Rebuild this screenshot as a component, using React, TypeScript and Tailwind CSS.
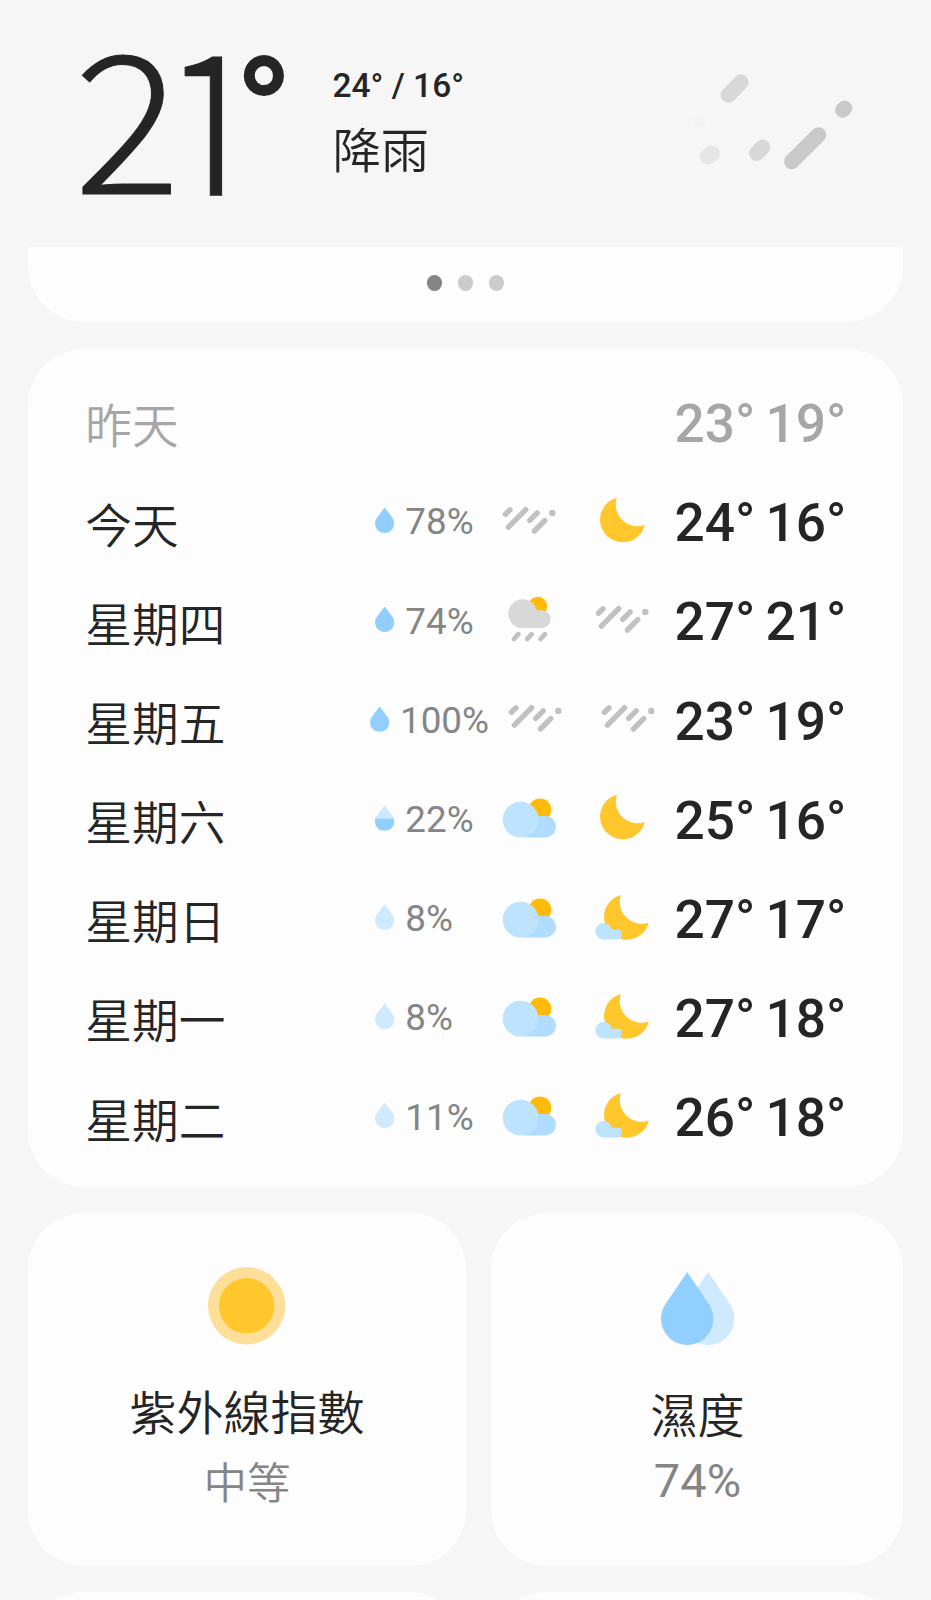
import React from "react";

type Sky = "rain" | "moon" | "sunRain" | "partlyCloudy" | "cloudyNight";

interface Day {
  name: string;
  chance?: number;
  day?: Sky;
  night?: Sky;
  high: number;
  low: number;
}

const days: Day[] = [
  { name: "昨天", high: 23, low: 19 },
  { name: "今天", chance: 78, day: "rain", night: "moon", high: 24, low: 16 },
  { name: "星期四", chance: 74, day: "sunRain", night: "rain", high: 27, low: 21 },
  { name: "星期五", chance: 100, day: "rain", night: "rain", high: 23, low: 19 },
  { name: "星期六", chance: 22, day: "partlyCloudy", night: "moon", high: 25, low: 16 },
  { name: "星期日", chance: 8, day: "partlyCloudy", night: "cloudyNight", high: 27, low: 17 },
  { name: "星期一", chance: 8, day: "partlyCloudy", night: "cloudyNight", high: 27, low: 18 },
  { name: "星期二", chance: 11, day: "partlyCloudy", night: "cloudyNight", high: 26, low: 18 },
];

const moonPath = "M24.2 5.9 A22.7 22.7 0 1 0 52.2 33.2 A21.8 21.8 0 0 1 24.2 5.9 Z";

function SkyIcon({ kind }: { kind: Sky }) {
  return (
    <svg viewBox="0 0 60 60" className="size-[60px] shrink-0">
      {kind === "rain" && (
        <g stroke="#c1c1c1" strokeWidth="5.4" strokeLinecap="round">
          <path d="M6.4 22.2 L11 17.8" />
          <path d="M9.4 35.2 L26.7 17.7" />
          <path d="M30.7 28.4 L38.2 20.9" />
          <path d="M35.4 39 L45.7 28.6" />
          <circle cx="53.3" cy="20.9" r="3.2" fill="#c1c1c1" stroke="none" />
        </g>
      )}
      {kind === "moon" && <path d={moonPath} fill="#ffc72c" transform="translate(.6 -.2)" />}
      {kind === "sunRain" && (
        <g>
          <circle cx="38.7" cy="15.2" r="9.4" fill="#ffba0c" />
          <circle cx="23.7" cy="22.7" r="14.4" fill="#d8d8d8" />
          <rect x="23" y="19.2" width="28.5" height="17.9" rx="8.9" fill="#d8d8d8" />
          <g stroke="#c1c1c1" strokeWidth="4.8" strokeLinecap="round">
            <path d="M15 48 L19.4 43.2" />
            <path d="M28.3 48 L32.7 43.2" />
            <path d="M41.6 48 L46 43.2" />
          </g>
        </g>
      )}
      {kind === "partlyCloudy" && (
        <g transform="translate(0 -.4)">
          <circle cx="41" cy="21.1" r="11.3" fill="#ffba0c" />
          <rect x="16" y="27.4" width="41" height="21.5" rx="10.7" fill="#b0dcff" />
          <circle cx="21.6" cy="31" r="17.9" fill="#bde3fe" />
        </g>
      )}
      {kind === "cloudyNight" && (
        <g transform="translate(0 -.4)">
          <path d={moonPath} fill="#ffc72c" transform="translate(4.6 .6)" />
          <circle cx="11.6" cy="42.6" r="8.2" fill="#bde3fe" />
          <path
            d="M11.6 36 L17 37 Q19 41.2 22 41.2 H26.2 Q29.8 41.4 29.8 45 Q29.8 50.8 26 50.8 H11.6 Z"
            fill="#bde3fe"
          />
        </g>
      )}
    </svg>
  );
}

function Drop({ chance }: { chance: number }) {
  const shape = "M9.65 0 L17.3 10 A9.65 9.65 0 1 1 2 10 Z";
  return (
    <svg viewBox="0 0 19.3 25.5" className="h-[25.5px] w-[19.3px] shrink-0 -translate-y-[1.5px]">
      <path d={shape} fill={chance >= 50 ? "#91cfff" : "#cfe9ff"} />
      {chance >= 20 && chance < 50 && (
        <path d="M0.2 13 H19.1 Q19.3 14 19.3 15.85 A9.65 9.65 0 0 1 0 15.85 Q0 14 .2 13 Z" fill="#91cfff" />
      )}
    </svg>
  );
}

function Row({ item }: { item: Day }) {
  const past = item.chance === undefined;
  const wide = item.chance === 100;
  return (
    <li className={`flex h-[99.2px] items-center ${past ? "text-[#a6a6a6]" : "text-[#252525]"}`}>
      <span className="-ml-[0.7px] w-[289.7px] translate-y-[0.6px] font-['Noto_Sans_CJK_TC'] text-[46.7px] leading-none font-[350]">
        {item.name}
      </span>
      {item.chance !== undefined && item.day && item.night ? (
        <div className={`flex items-center ${wide ? "-ml-[5.3px] w-[304.8px]" : "w-[299.5px]"}`}>
          <Drop chance={item.chance} />
          <span
            className={`ml-[11px] shrink-0 translate-y-[1.2px] text-[36.8px] leading-none text-[#858585] ${wide ? "w-[104.5px]" : "w-[93.7px]"}`}
          >
            {item.chance}%
          </span>
          <SkyIcon kind={item.day} />
          <div className="w-[33.5px] shrink-0" />
          <SkyIcon kind={item.night} />
        </div>
      ) : (
        <div className="w-[299.5px]" />
      )}
      <div className="flex translate-y-[1.7px] text-[53.2px] leading-none font-medium">
        <span className="w-[91px]">{item.high}°</span>
        <span>{item.low}°</span>
      </div>
    </li>
  );
}

export default function App() {
  return (
    <div className="flex h-[1600px] w-[931px] flex-col overflow-hidden bg-[#f6f6f6] font-['Roboto','Noto_Sans_CJK_TC',sans-serif] text-[#252525]">
      <header className="flex h-[247px] shrink-0">
        <div className="flex h-[209px] pt-[9px] pl-[73.5px] font-['Noto_Sans_CJK_TC'] text-[195px] leading-[200px] font-light [-webkit-text-stroke:1px_#252525]">
          <span className="w-[86.5px] origin-[0_186px] scale-x-[1.02] scale-y-[0.99]">2</span>
          <span className="w-[74.5px] origin-[0_48px] translate-y-[1px] scale-y-[1.11] [clip-path:inset(0_0_28px_0)]">1</span>
        </div>
        <span className="mt-[37.5px] w-[57px] text-[150px] leading-[150px] font-extrabold">°</span>
        <div className="ml-[41px] w-[200px] pt-[66px]">
          <p className="text-[33.5px] leading-10 font-medium">24° / 16°</p>
          <p className="mt-[13.5px] font-['Noto_Sans_CJK_TC'] text-[48.3px] leading-[54px] font-[350]">降雨</p>
        </div>
        <svg viewBox="0 0 170 110" className="mt-[65px] ml-[157.5px] h-[110px] w-[170px]">
          <g strokeWidth="15.3" strokeLinecap="round">
            <path d="M38.3 30 L51 17.2" stroke="#d8d8d8" />
            <circle cx="9.3" cy="56" r="6.5" fill="#f3f3f3" />
            <path d="M17.9 91.3 L21.9 88.7" stroke="#e6e6e6" strokeWidth="16.5" />
            <path d="M66.7 88.3 L72.7 82.2" stroke="#d8d8d8" />
            <path d="M101.7 96.5 L128.6 69.8" stroke="#c9c9c9" />
            <path d="M152.7 45 L154.6 43.2" stroke="#c9c9c9" />
          </g>
        </svg>
      </header>

      <main className="flex flex-col px-[28px]">
        <section className="flex h-[75px] items-center justify-center gap-[15.4px] rounded-b-[56px] bg-[#fdfdfd] pb-[3px]">
          <i className="size-[15.6px] rounded-full bg-[#858585]" />
          <i className="size-[15.6px] rounded-full bg-[#cbcbcb]" />
          <i className="size-[15.6px] rounded-full bg-[#cbcbcb]" />
        </section>

        <section className="mt-[27px] h-[838px] rounded-[56px] bg-[#fdfdfd] pt-[24.1px] pl-[58px]">
          <ul>
            {days.map((d) => (
              <Row key={d.name} item={d} />
            ))}
          </ul>
        </section>

        <div className="mt-[26px] flex justify-between text-center">
          <section className="flex h-[353px] w-[438px] flex-col items-center rounded-[56px] bg-[#fdfdfd] pt-[54px]">
            <svg viewBox="0 0 78 78" className="size-[78px]">
              <circle cx="38.6" cy="38.8" r="38.7" fill="#fddf99" />
              <circle cx="38.6" cy="38.8" r="27.7" fill="#ffc72c" />
            </svg>
            <h2 className="mt-[35px] font-['Noto_Sans_CJK_TC'] text-[47px] leading-[60px] font-[350]">紫外線指數</h2>
            <p className="mt-[11px] font-['Noto_Sans_CJK_TC'] text-[43.5px] leading-[60px] font-[350] text-[#858585]">中等</p>
          </section>
          <section className="flex h-[353px] w-[412px] flex-col items-center rounded-[56px] bg-[#fdfdfd] pt-[59px]">
            <svg viewBox="0 0 73.4 73" className="ml-[1px] h-[73px] w-[73.4px]">
              <path d="M47.2 0 L68.9 32.1 A26.2 26.2 0 1 1 25.5 32.1 Z" fill="#cfe9ff" />
              <path d="M26.2 0 L47.9 32.1 A26.2 26.2 0 1 1 4.5 32.1 Z" fill="#91cfff" />
            </svg>
            <h2 className="mt-[38px] ml-[1px] font-['Noto_Sans_CJK_TC'] text-[47px] leading-[60px] font-[350]">濕度</h2>
            <p className="mt-[8px] ml-[1px] text-[47px] leading-[60px] text-[#858585]">74%</p>
          </section>
        </div>

        <div className="mt-[26px] flex justify-between">
          <section className="h-[353px] w-[438px] rounded-[56px] bg-[#fdfdfd]" />
          <section className="h-[353px] w-[412px] rounded-[56px] bg-[#fdfdfd]" />
        </div>
      </main>
    </div>
  );
}
